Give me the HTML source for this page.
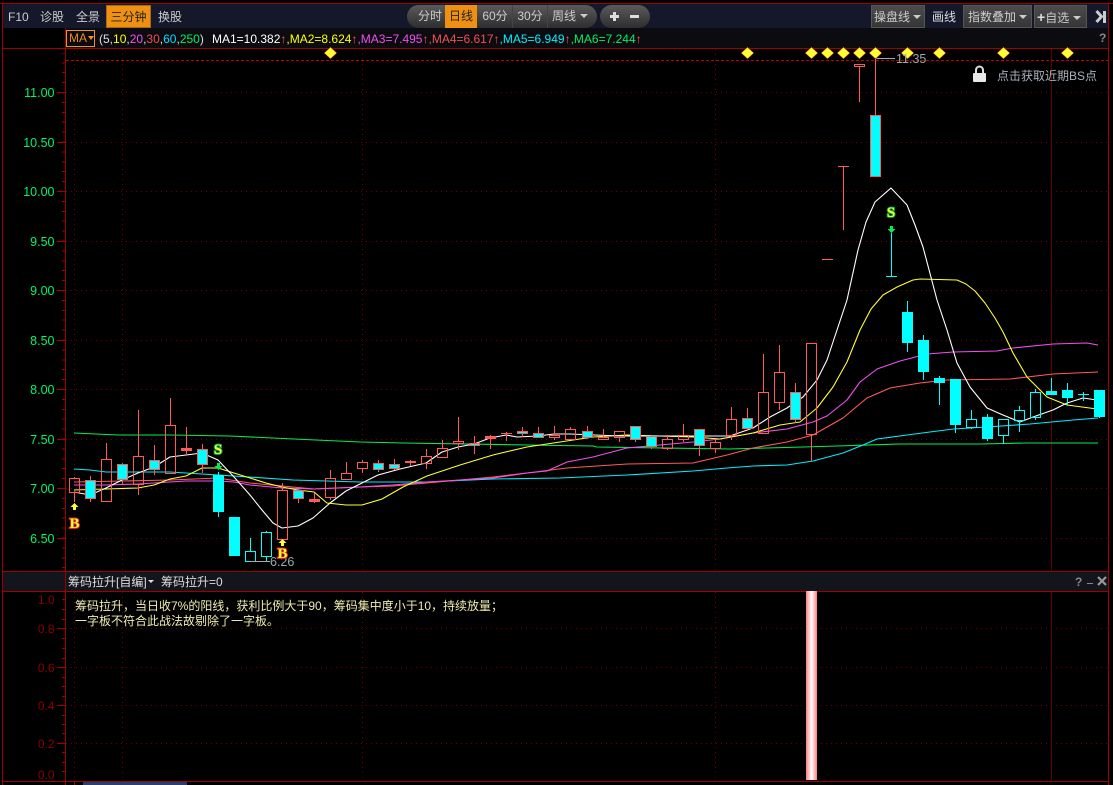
<!DOCTYPE html>
<html><head><meta charset="utf-8"><style>
html,body{margin:0;padding:0;background:#000;width:1113px;height:785px;overflow:hidden}
body{position:relative;font-family:"Liberation Sans","Noto Sans CJK SC",sans-serif;font-size:12px;color:#ccc}
.a{position:absolute;white-space:nowrap;line-height:16px}
.btn{position:absolute;top:5px;height:23px;line-height:23px;box-sizing:border-box;background:linear-gradient(#4c4c4c,#353535);border:1px solid #555;color:#ccc;white-space:nowrap;padding-left:3px}
.pill{position:absolute;top:5px;height:23px;border-radius:12px;background:linear-gradient(#5a5a5a,#2e2e2e)}
.c{position:absolute;top:5px;height:23px;line-height:23px;text-align:center;color:#ccc}
.tri{display:inline-block;width:0;height:0;border-left:4px solid transparent;border-right:4px solid transparent;border-top:4px solid #ccc;vertical-align:2px}
svg{position:absolute;left:0;top:0}
</style></head><body>
<div style="position:absolute;left:3px;top:4px;width:1105px;height:24px;background:#14182a"></div>
<div style="position:absolute;left:65px;top:28px;width:1043px;height:20px;background:#0c0c10"></div>
<div style="position:absolute;left:3px;top:572px;width:1105px;height:19px;background:#13151c"></div>

<div class="a" style="left:8px;top:9px">F10</div>
<div class="a" style="left:40px;top:9px">诊股</div>
<div class="a" style="left:76px;top:9px">全景</div>
<div class="a" style="left:106px;top:5px;width:45px;height:23px;line-height:23px;background:#f09010;border:1px solid #a86a10;box-sizing:border-box;color:#222;text-align:center">三分钟</div>
<div class="a" style="left:158px;top:9px">换股</div>

<div class="pill" style="left:407px;width:190px"></div>
<div class="c" style="left:415px;width:30px">分时</div>
<div class="c" style="left:445px;width:32px;background:#f09010;color:#222">日线</div>
<div class="c" style="left:478px;width:34px">60分</div>
<div style="position:absolute;left:512px;top:5px;width:1px;height:23px;background:#444"></div>
<div class="c" style="left:513px;width:34px">30分</div>
<div style="position:absolute;left:547px;top:5px;width:1px;height:23px;background:#444"></div>
<div class="c" style="left:552px;width:42px;text-align:left">周线 <span class="tri" style="margin-left:1px"></span></div>
<div class="pill" style="left:600px;width:50px"></div>
<div style="position:absolute;left:610px;top:15px;width:9px;height:3px;background:#ddd"></div>
<div style="position:absolute;left:613px;top:12px;width:3px;height:9px;background:#ddd"></div>
<div style="position:absolute;left:630px;top:15px;width:9px;height:3px;background:#ddd"></div>

<div class="btn" style="left:871px;width:54px;padding-left:2px">操盘线 <span class="tri"></span></div>
<div class="a" style="left:932px;top:9px;color:#ddd">画线</div>
<div class="btn" style="left:963px;width:69px;padding-left:4px">指数叠加 <span class="tri"></span></div>
<div class="btn" style="left:1034px;width:53px;padding-left:2px"><b style="font-size:14px;color:#ddd">+</b>自选 <span class="tri"></span></div>

<div class="a" style="left:66px;top:30px;width:29px;height:17px;line-height:15px;box-sizing:border-box;border:1px solid #f09020;color:#e88a20;padding-left:2px">MA<span class="tri" style="border-top-color:#f09020;border-left-width:3px;border-right-width:3px;margin-left:1px"></span></div>
<div class="a" style="left:99px;top:31px;color:#dde"><span style="color:#dde">(5,</span><span style="color:#ff0">10</span><span style="color:#dde">,</span><span style="color:#f050f0">20</span><span style="color:#dde">,</span><span style="color:#f05050">30</span><span style="color:#dde">,</span><span style="color:#00e0ff">60</span><span style="color:#dde">,</span><span style="color:#00f060">250</span><span style="color:#dde">)</span></div>
<div class="a" style="left:212px;top:31px"><span style="color:#fff">MA1=10.382</span><span style="color:#f55">↑</span><span style="color:#ff0">,MA2=8.624</span><span style="color:#f55">↑</span><span style="color:#f050f0">,MA3=7.495</span><span style="color:#f55">↑</span><span style="color:#f05050">,MA4=6.617</span><span style="color:#f55">↑</span><span style="color:#00f0ff">,MA5=6.949</span><span style="color:#f55">↑</span><span style="color:#00f060">,MA6=7.244</span><span style="color:#f55">↑</span></div>
<div class="a" style="left:1099px;top:30px;color:#888;font-weight:bold">?</div>

<svg width="1113" height="785" viewBox="0 0 1113 785" font-family="Liberation Sans,Noto Sans CJK SC,sans-serif" font-size="12">
<g shape-rendering="crispEdges" fill="none">
<g stroke="#700000" stroke-dasharray="1 4">
<path d="M66 92.5H1108M66 142.5H1108M66 191.5H1108M66 241.5H1108M66 290.5H1108M66 340.5H1108M66 389.5H1108M66 439.5H1108M66 488.5H1108M66 538.5H1108"/>
<path d="M66 628.5H1108M66 667.5H1108M66 705.5H1108M66 743.5H1108"/>
<path d="M74.5 49V570M122.5 49V570M362.5 49V570M715.5 49V570M74.5 592V780M122.5 592V780M362.5 592V780M715.5 592V780"/>
</g>
<path d="M1051.5 49V570M1051.5 592V780" stroke="#5c0000"/>
<path d="M66 60.5H1108" stroke="#c00000" stroke-dasharray="3 2"/>
<path d="M0 3.5H1113M3 48.5H1108M3 571.5H1108M3 591.5H1108M3 781.5H1108M2.5 3V785M65.5 28V785M1108.5 3V785M74.5 782V785" stroke="#a00000"/>
<path d="M63.5 53V570" stroke="#a00000" stroke-width="3" stroke-dasharray="1 8.9" stroke-dashoffset="0.6"/>
<path d="M57 92.5H65M57 142.5H65M57 191.5H65M57 241.5H65M57 290.5H65M57 340.5H65M57 389.5H65M57 439.5H65M57 488.5H65M57 538.5H65" stroke="#a00000"/>
<path d="M62 599.5H65M62 609.5H65M62 619.5H65M57 628.5H65M62 638.5H65M62 648.5H65M62 658.5H65M57 667.5H65M62 677.5H65M62 686.5H65M62 696.5H65M57 705.5H65M62 715.5H65M62 724.5H65M62 733.5H65M57 743.5H65M62 752.5H65M62 762.5H65M62 771.5H65" stroke="#a00000"/>
</g>
<rect x="83" y="782" width="104" height="3" fill="#2a3f6a"/>
<g fill="#00f568" text-anchor="end" font-size="12.5">
<text x="54.5" y="97">11.00</text><text x="54.5" y="147">10.50</text><text x="54.5" y="196">10.00</text><text x="54.5" y="246">9.50</text><text x="54.5" y="295">9.00</text><text x="54.5" y="345">8.50</text><text x="54.5" y="394">8.00</text><text x="54.5" y="444">7.50</text><text x="54.5" y="493">7.00</text><text x="54.5" y="543">6.50</text>
</g>
<g fill="#8a0000" text-anchor="end">
<text x="54.5" y="604">1.0</text><text x="54.5" y="633">0.8</text><text x="54.5" y="672">0.6</text><text x="54.5" y="710">0.4</text><text x="54.5" y="748">0.2</text><text x="54.5" y="779">0.0</text>
</g>

<!-- MA lines -->
<g fill="none" stroke-width="1.1" stroke-linejoin="round">
<polyline stroke="#00ee55" points="74,433 118,435 170,435 230,436 294,439 360,442 403,443 527,445 593,446 597,447 730,449 803,447 837,446 900,444 980,444 1027,443 1098,443"/>
<polyline stroke="#00eeff" points="74,469 90,470 106,472 170,472 234,476 293,480 360,482 427,482 493,479 560,478 627,475 693,471 727,468 753,466 787,465 813,461 843,453 863,445 877,439 907,435 953,429 987,427 1030,424 1073,420 1098,418"/>
<polyline stroke="#ff5a5a" points="74,482 170,480 218,478 250,483 282,486 314,489 360,487 393,486 460,480 493,477 527,473 567,468 627,464 693,463 727,455 753,448 787,442 813,435 843,418 867,398 890,388 920,383 947,380 1010,379 1053,374 1098,372"/>
<polyline stroke="#f050f0" points="74,485 106,485 138,484 154,483 170,482 186,481 218,481 234,482 250,485 282,488 314,489 360,487 393,485 427,482 493,478 527,473 547,471 567,462 593,457 627,448 660,445 693,442 720,439 753,433 787,429 813,422 827,416 847,400 860,382 877,369 900,361 927,354 953,352 997,351 1013,348 1053,344 1087,343 1098,345"/>
<polyline stroke="#ffff33" points="74,490 106,489 138,488 154,485 170,479 186,476 202,468 218,468 234,473 250,478 266,483 282,487 298,490 314,492 327,503 346,505 362,505 382,499 403,487 427,476 460,465 493,455 527,447 560,442 593,437 627,435 693,437 720,439 753,433 780,425 800,422 817,408 833,387 847,362 860,330 871,309 883,295 897,287 913,280 920,279 957,280 966,284 975,291 985,303 995,318 1003,332 1013,353 1027,377 1047,397 1067,405 1097,409"/>
<polyline stroke="#ffffff" points="74,492 90,495 106,488 122,480 138,473 154,467 170,457 186,455 202,453 218,460 234,477 250,495 262,510 273,523 282,528 298,526 313,518 330,503 346,491 362,483 378,475 400,469 426,463 442,452 458,447 474,444 490,438 506,435 517,437 538,436 554,434 570,434 620,436 670,436 714,436 730,436 753,428 770,417 787,408 803,397 817,380 827,360 837,330 847,300 858,250 866,222 875,202 891,188 907,205 915,225 923,247 937,300 947,330 957,363 970,387 987,408 1003,415 1020,422 1033,417 1053,410 1067,403 1083,398 1097,400"/>
</g>

<!-- candles -->
<g shape-rendering="crispEdges">
<path fill="none" stroke="#ff5a5a" d="M74.5 477V478M74.5 493V502M90.5 476V480M90.5 499V502M106.5 443V459M122.5 463V464M122.5 480V485M138.5 410V456M138.5 484V495M154.5 445V460M154.5 469V475M170.5 398V425M186.5 427V455M202.5 444V449M202.5 465V473M282.5 483V490M298.5 488V490M298.5 499V503M314.5 493V503M330.5 470V478M330.5 497V500M346.5 462V473M346.5 479V480M362.5 460V462M362.5 468V473M378.5 460V463M378.5 469V472M394.5 459V464M394.5 468V470M410.5 460V466M426.5 449V456M426.5 463V469M442.5 440V448M442.5 457V458M458.5 417V441M458.5 443V450M474.5 436V443M474.5 445V454M490.5 435V449M506.5 432V441M522.5 427V431M522.5 433V437M538.5 427V433M538.5 437V438M554.5 426V435M554.5 437V440M570.5 427V429M570.5 439V440M587.5 426V431M587.5 437V439M603.5 429V437M619.5 437V442M635.5 439V442M651.5 435V436M651.5 446V449M667.5 435V439M667.5 448V450M683.5 424V435M683.5 439V442M699.5 445V456M715.5 439V442M715.5 448V453M731.5 407V419M731.5 435V440M747.5 408V418M747.5 429V430M763.5 354V392M779.5 345V372M779.5 402V410M795.5 383V392M795.5 419V423M811.5 434V461M843.5 166V230M859.5 67V102M875.5 58V115"/>
<path fill="none" stroke="#ff5a5a" d="M822 259.5H833M838 166.5H849"/>
<g fill="none" stroke="#ff5a5a">
<rect x="69.5" y="478.5" width="10" height="14"/><rect x="101.5" y="459.5" width="10" height="42"/><rect x="133.5" y="456.5" width="10" height="28"/><rect x="165.5" y="425.5" width="10" height="48"/><rect x="277.5" y="490.5" width="10" height="49"/><rect x="325.5" y="478.5" width="10" height="19"/><rect x="341.5" y="473.5" width="10" height="6"/><rect x="357.5" y="462.5" width="10" height="6"/><rect x="421.5" y="456.5" width="10" height="7"/><rect x="437.5" y="448.5" width="10" height="9"/><rect x="453.5" y="441.5" width="10" height="2"/><rect x="549.5" y="435.5" width="10" height="2"/><rect x="565.5" y="429.5" width="10" height="10"/><rect x="598.5" y="437.5" width="10" height="2"/><rect x="614.5" y="431.5" width="10" height="6"/><rect x="662.5" y="439.5" width="10" height="9"/><rect x="678.5" y="435.5" width="10" height="4"/><rect x="710.5" y="442.5" width="10" height="6"/><rect x="726.5" y="419.5" width="10" height="16"/><rect x="758.5" y="392.5" width="10" height="41"/><rect x="774.5" y="372.5" width="10" height="30"/><rect x="806.5" y="343.5" width="10" height="91"/><rect x="854.5" y="64.5" width="10" height="2"/>
</g>
<g fill="#00ffff" stroke="#ff5a5a">
<rect x="85.5" y="480.5" width="10" height="18"/><rect x="117.5" y="464.5" width="10" height="15"/><rect x="149.5" y="460.5" width="10" height="9"/><rect x="197.5" y="449.5" width="10" height="15"/><rect x="293.5" y="490.5" width="10" height="8"/><rect x="373.5" y="463.5" width="10" height="6"/><rect x="389.5" y="464.5" width="10" height="4"/><rect x="469.5" y="443.5" width="10" height="2"/><rect x="517.5" y="431.5" width="10" height="2"/><rect x="533.5" y="433.5" width="10" height="4"/><rect x="582.5" y="431.5" width="10" height="6"/><rect x="630.5" y="426.5" width="10" height="13"/><rect x="646.5" y="436.5" width="10" height="10"/><rect x="694.5" y="429.5" width="10" height="16"/><rect x="742.5" y="418.5" width="10" height="10"/><rect x="790.5" y="392.5" width="10" height="27"/><rect x="870.5" y="115.5" width="10" height="61"/>
</g>
<g fill="#ff5a5a">
<rect x="181" y="448" width="11" height="3"/><rect x="309" y="499" width="11" height="3"/><rect x="405" y="461" width="11" height="2"/><rect x="485" y="436" width="11" height="3"/><rect x="501" y="433" width="11" height="1"/>
</g>
<path fill="none" stroke="#00ffff" d="M218.5 472V475M218.5 512V517M250.5 538V551M266.5 531V532M266.5 556V561M891.5 233V276M907.5 301V312M907.5 343V352M923.5 335V340M923.5 372V380M939.5 376V378M939.5 383V405M955.5 425V433M971.5 410V419M971.5 427V429M987.5 414V417M987.5 439V441M1003.5 436V444M1019.5 406V410M1019.5 420V432M1035.5 389V392M1035.5 417V420M1051.5 378V391M1067.5 383V390M1067.5 398V405M1083.5 392V401M1099.5 417V418M886 276.5H897M1078 394.5H1089"/>
<g fill="#00ffff">
<rect x="213" y="475" width="11" height="37"/><rect x="229" y="517" width="11" height="39"/><rect x="902" y="312" width="11" height="31"/><rect x="918" y="340" width="11" height="32"/><rect x="934" y="378" width="11" height="5"/><rect x="950" y="379" width="11" height="46"/><rect x="982" y="417" width="11" height="22"/><rect x="1046" y="391" width="11" height="4"/><rect x="1062" y="390" width="11" height="8"/><rect x="1094" y="390" width="11" height="27"/>
</g>
<g fill="none" stroke="#00ffff">
<rect x="245.5" y="551.5" width="10" height="10"/><rect x="261.5" y="532.5" width="10" height="24"/><rect x="966.5" y="419.5" width="10" height="8"/><rect x="998.5" y="419.5" width="10" height="16"/><rect x="1014.5" y="410.5" width="10" height="10"/><rect x="1030.5" y="392.5" width="10" height="25"/>
</g>
<path d="M250 561.5H270M875 58.5H895" stroke="#aaa" fill="none"/>
</g>

<!-- diamonds -->
<g fill="#ffff33" stroke="#7a1000" stroke-width=".6">
<path d="M330.5 47l6.500 6-6.500 6-6.500-6z"/><path d="M747.5 47l6.500 6-6.500 6-6.500-6z"/><path d="M811.5 47l6.500 6-6.500 6-6.500-6z"/><path d="M827.5 47l6.500 6-6.500 6-6.500-6z"/><path d="M843.5 47l6.500 6-6.500 6-6.500-6z"/><path d="M859.5 47l6.500 6-6.500 6-6.500-6z"/><path d="M875.5 47l6.500 6-6.500 6-6.500-6z"/><path d="M907.5 47l6.500 6-6.500 6-6.500-6z"/><path d="M939.5 47l6.500 6-6.500 6-6.500-6z"/><path d="M1003.5 47l6.500 6-6.500 6-6.500-6z"/><path d="M1067.5 47l6.500 6-6.500 6-6.500-6z"/>
</g>
<text x="896" y="63" fill="#9aa" font-size="12.5">11.35</text>
<text x="270" y="566" fill="#9aa" font-size="12.5">6.26</text>

<!-- markers -->
<path d="M74.5 503l4 4h-2.500v3h-3v-3h-2.500z" fill="#ffff33"/>
<path d="M282.500 539l4 4h-2.500v3h-3v-3h-2.500z" fill="#ffff33"/>
<path d="M218.500 470l4-4h-2.500v-3h-3v3h-2.500z" fill="#00ee55"/>
<path d="M891.500 233l4-4h-2.500v-3h-3v3h-2.500z" fill="#00ee55"/>
<g font-family="Liberation Serif,serif" font-weight="bold" font-size="15" text-anchor="middle" style="paint-order:stroke" stroke-width="2">
<text x="74.500" y="528" fill="#ffff33" stroke="#e02020">B</text>
<text x="282.500" y="558" fill="#ffff33" stroke="#e02020">B</text>
<text x="218" y="454" fill="#ffff33" stroke="#00a040">S</text>
<text x="891" y="217" fill="#ffff33" stroke="#00a040">S</text>
</g>

<!-- lock -->
<path d="M976 74v-4a3.500 3.500 0 0 1 7 0v4" fill="none" stroke="#ddd" stroke-width="2"/>
<rect x="973" y="73" width="13" height="9" rx="1" fill="#e8e8e8"/>
<text x="997" y="80" fill="#a8b0b8">点击获取近期BS点</text>

<!-- right toolbar icon -->
<path d="M1096.500 11l5 5.500-5 5.500" fill="none" stroke="#ccc" stroke-width="3"/>
<rect x="1103" y="11" width="3" height="12" fill="#ccc"/>

<!-- lower pane bar -->
<defs><linearGradient id="g" x1="0" x2="1" y1="0" y2="0"><stop offset="0" stop-color="#ff7f7f"/><stop offset=".5" stop-color="#fff"/><stop offset="1" stop-color="#ff7f7f"/></linearGradient></defs>
<rect x="806" y="591" width="11" height="189" fill="url(#g)"/>

<text x="68" y="586" fill="#ddd">筹码拉升[自编]</text>
<path d="M148 580h6l-3 3z" fill="#ddd"/>
<text x="161" y="586" fill="#ddd">筹码拉升=0</text>
<text x="75" y="610" fill="#f0ecb0">筹码拉升，当日收7%的阳线，获利比例大于90，筹码集中度小于10，持续放量；</text>
<text x="75" y="625" fill="#f0ecb0">一字板不符合此战法故剔除了一字板。</text>
<text x="1075" y="586" fill="#888" font-weight="bold">?</text>
<path d="M1087 583.500H1093" stroke="#888"/>
<path d="M1098 577l8 8M1106 577l-8 8" stroke="#999" stroke-width="2.200"/>
</svg>
</body></html>
